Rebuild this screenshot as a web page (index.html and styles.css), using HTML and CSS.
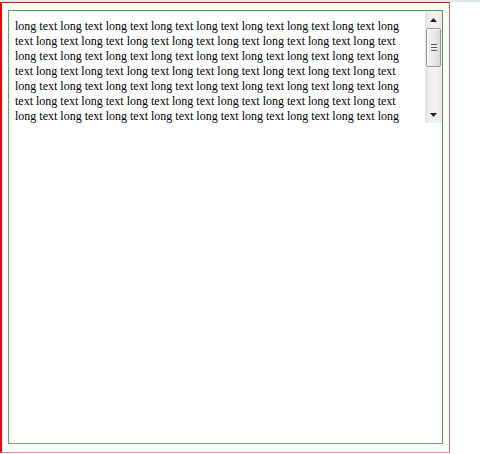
FILE: index.html
```html
<!DOCTYPE html>
<html>
<head>
<meta charset="utf-8">
<link rel="stylesheet" href="styles.css">
</head>
<body>
<div class="strip"></div>
<div class="outer">
  <div class="inner">
    <div class="scroller">
      <div class="text">long text long text long text long text long text long text long text long text long text long text long text long text long text long text long text long text long text long text long text long text long text long text long text long text long text long text long text long text long text long text long text long text long text long text long text long text long text long text long text long text long text long text long text long text long text long text long text long text long text long text long text long text long text long text long text long text long text long text long text long text long text long text long text long text long text long text long text long text long text long text long text long text long text long text long text long text long text long text long text long text long text long text long text long text long text long text long text long text long text long text long text long text long text long text long text long text long text long text long text long text long text long text long text long text long text long text long text long text long text long text long text long text long text long text long text long text long text long text</div>
      <div class="sbar">
        <div class="sbtn"><svg width="7" height="4" viewBox="0 0 7 4"><path d="M0 4 L3.5 0 L7 4 Z" fill="#222"/></svg></div>
        <div class="track">
          <div class="thumb">
            <span class="grip"></span><span class="grip"></span><span class="grip"></span>
          </div>
        </div>
        <div class="sbtn"><svg width="7" height="4" viewBox="0 0 7 4"><path d="M0 0 L7 0 L3.5 4 Z" fill="#222"/></svg></div>
      </div>
    </div>
  </div>
</div>
</body>
</html>
```

FILE: styles.css
```css
html, body {
  margin: 0;
  padding: 0;
  background: #ffffff;
}
body {
  width: 480px;
  height: 454px;
  overflow: hidden;
}
.strip {
  height: 2px;
  background: #dbe6f1;
}
.outer {
  box-sizing: border-box;
  width: 450px;
  height: 451px;
  border-top: 1px solid #ff0000;
  border-left: 2px solid #ff0000;
  border-right: 1px solid #ec5a5a;
  border-bottom: 1px solid #ff8e8e;
  padding: 7px 6px 8px 6px;
  display: flex;
  flex-direction: column;
}
.inner {
  flex: 1;
  border: 1px solid #4ca24c;
  border-left-color: #5cab5c;
  border-bottom-color: #6db56d;
}
.scroller {
  display: flex;
  height: 112px;
}
.text {
  flex: 1;
  overflow: hidden;
  padding: 8px 14px 4px 6px;
  font-family: "Liberation Serif", "Times New Roman", serif;
  font-size: 12px;
  line-height: 15px;
  color: #000;
}
.sbar {
  width: 17px;
  display: flex;
  flex-direction: column;
  background: linear-gradient(to right, #e4e4e4, #f1f1f1 40%, #f1f1f1 70%, #e8e8e8);
}
.sbtn {
  height: 17px;
  display: flex;
  align-items: center;
  justify-content: center;
}
.track {
  flex: 1;
  display: flex;
  flex-direction: column;
}
.thumb {
  box-sizing: border-box;
  margin: 0 1px;
  height: 39px;
  border: 1px solid #9b9b9b;
  border-radius: 2px;
  background: linear-gradient(to right, #f3f3f3, #e9e9e9 50%, #d9d9d9);
  box-shadow: inset 1px 1px 0 #fdfdfd;
  display: flex;
  flex-direction: column;
  align-items: center;
  justify-content: center;
  gap: 1px;
}
.grip {
  width: 6px;
  height: 1px;
  background: #555;
  border-bottom: 1px solid #f8f8f8;
}
```
